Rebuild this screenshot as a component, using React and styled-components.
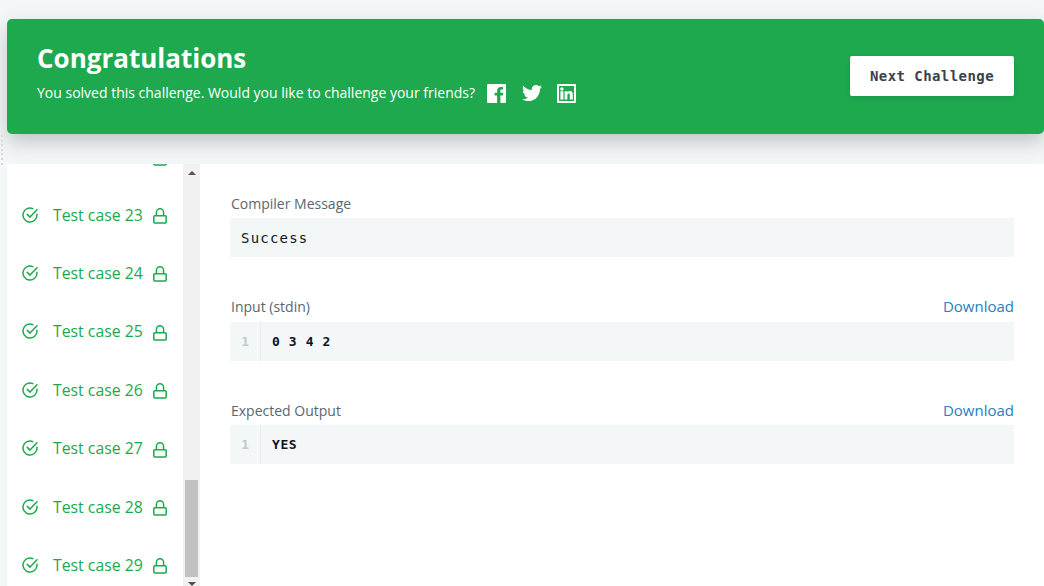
import React from 'react'
import styled, { createGlobalStyle } from 'styled-components'
import { FaTwitter } from 'react-icons/fa'

const GlobalStyle = createGlobalStyle`
  html, body {
    margin: 0;
    height: 586px;
    overflow: hidden;
    background: #f3f7f7;
    font-family: "Open Sans", "Noto Sans", sans-serif;
  }
`

const Page = styled.div`
  position: relative;
  display: flex;
  flex-direction: column;
  width: 1044px;
  height: 586px;
  overflow: hidden;
  padding: 19px 0 0 7px;
  box-sizing: border-box;
`

const ResizeDots = styled.div`
  position: absolute;
  top: 135px;
  left: 1px;
  width: 2px;
  height: 30px;
  background: repeating-linear-gradient(#d6d9dc 0 2px, transparent 2px 4.6px);
`

const Banner = styled.section`
  display: flex;
  flex: none;
  align-items: center;
  justify-content: space-between;
  height: 115px;
  padding: 0 30px 0;
  box-sizing: border-box;
  background: #1ea94f;
  border-radius: 5px;
  box-shadow: 0 8px 20px rgba(40, 50, 60, 0.26);
  color: #fff;
`

const BannerText = styled.div`
  margin-bottom: 8px;
`

const Title = styled.h2`
  margin: 0 0 5px;
  font-size: 26px;
  line-height: 36px;
  font-weight: 700;
`

const Subtitle = styled.div`
  display: flex;
  align-items: center;
  gap: 12px;
  font-size: 14px;
  line-height: 24px;
`

const Socials = styled.span`
  display: flex;
  align-items: center;
  gap: 15.5px;
`

const NextButton = styled.button`
  width: 164px;
  height: 40px;
  margin-bottom: 2px;
  border: 0;
  border-radius: 2px;
  background: #fff;
  color: #39424e;
  font-family: "DejaVu Sans Mono", "Liberation Mono", monospace;
  font-size: 14px;
  font-weight: 700;
  letter-spacing: 0.43px;
  box-shadow: 0 2px 6px rgba(0, 0, 0, 0.1);
`

const Body = styled.div`
  display: flex;
  flex: none;
  height: 430.15px;
  margin-top: 30px;
`

const Sidebar = styled.aside`
  display: flex;
  flex-direction: column;
  justify-content: flex-end;
  flex: none;
  width: 176px;
  overflow: hidden;
  background: #fff;
`

const CaseRow = styled.div`
  display: flex;
  flex: none;
  align-items: center;
  height: 58.4px;
  padding-left: 15px;
  color: #1ba94c;
  font-size: 15.8px;
`

const CaseName = styled.span`
  margin: 0 10px 0 15px;
  white-space: nowrap;
`

const Scrollbar = styled.div`
  display: flex;
  flex-direction: column;
  align-items: center;
  flex: none;
  width: 17px;
  height: 422px;
  background: #f1f1f1;
`

const Arrow = styled.div`
  flex: none;
  width: 0;
  height: 0;
  margin: ${p => (p.$down ? '5px 0 0' : '7px 0 0')};
  border-left: 4px solid transparent;
  border-right: 4px solid transparent;
  border-${p => (p.$down ? 'top' : 'bottom')}: 4px solid #505050;
`

const Thumb = styled.div`
  flex: none;
  width: 13px;
  height: 97px;
  margin-top: auto;
  background: #c1c1c1;
`

const Main = styled.main`
  display: flex;
  flex-direction: column;
  flex: 1;
  padding: 24px 30px 0;
  background: #fff;
`

const Block = styled.div`
  margin-bottom: ${p => p.$gap}px;
`

const BlockHead = styled.div`
  display: flex;
  align-items: center;
  justify-content: space-between;
  height: ${p => p.$height}px;
  padding-bottom: ${p => p.$lift || 0}px;
  box-sizing: border-box;
`

const Label = styled.span`
  margin-left: 1px;
  color: #576871;
  font-size: 14px;
`

const DownloadLink = styled.a`
  color: #2a7dbf;
  font-size: 15px;
`

const MessageBox = styled.div`
  height: 39px;
  padding-left: 11px;
  background: #f3f7f7;
  color: #0e141e;
  font-family: "DejaVu Sans Mono", monospace;
  font-size: 14px;
  letter-spacing: 1.2px;
  line-height: 41px;
`

const CodeBox = styled.div`
  display: flex;
  height: 39px;
  background: #f3f7f7;
  color: #0e141e;
  font-family: "DejaVu Sans Mono", monospace;
  font-size: 13px;
  font-weight: 700;
  line-height: 39px;
`

const Gutter = styled.span`
  flex: none;
  width: 31px;
  padding-right: 11px;
  box-sizing: border-box;
  border-right: 1px solid #e7ecee;
  color: #c2c7d0;
  text-align: right;
`

const CodeText = styled.span`
  padding-left: 11px;
  letter-spacing: ${p => p.$spacing || 0}px;
  white-space: pre;
`

const StatusIcon = () => (
  <svg width="16" height="16" viewBox="0 0 16 16" fill="none" stroke="currentColor" strokeWidth="1.5" strokeLinecap="round" strokeLinejoin="round" style={{ flex: 'none' }}>
    <path d="M15 7.3V8a7 7 0 1 1-4.2-6.4" />
    <path d="M5.3 7.4 8 10.1 15 2.8" />
  </svg>
)

const LockIcon = () => (
  <svg width="14" height="16" viewBox="0 0 14 16" fill="none" stroke="currentColor" strokeWidth="1.5" style={{ flex: 'none', marginTop: 3 }}>
    <rect x="0.8" y="7.8" width="12.4" height="7.2" rx="1" />
    <path d="M3.4 7.8V4.4a3.6 3.6 0 0 1 7.2 0v3.4" />
  </svg>
)

const FacebookIcon = () => (
  <svg width="19" height="19" viewBox="0 0 19 19" fill="#fff">
    <path d="M1 0h17a1 1 0 0 1 1 1v17a1 1 0 0 1-1 1h-4.6v-7.4h2.5l.4-2.9h-2.9V7c0-.8.2-1.4 1.4-1.4H16V3c-.3 0-1.2-.1-2.2-.1-2.2 0-3.7 1.3-3.7 3.8v2H7.6v2.9h2.5V19H1a1 1 0 0 1-1-1V1a1 1 0 0 1 1-1z" />
  </svg>
)

const LinkedinIcon = () => (
  <svg width="19" height="19" viewBox="0 0 19 19" fill="#fff">
    <path fillRule="evenodd" d="M1 0h17a1 1 0 0 1 1 1v17a1 1 0 0 1-1 1H1a1 1 0 0 1-1-1V1a1 1 0 0 1 1-1zm1 2v15h15V2z" />
    <rect x="3.4" y="7.2" width="3" height="8.4" />
    <circle cx="4.9" cy="4.9" r="1.7" />
    <path d="M7.6 7.2h2.8v1.2c.5-.8 1.4-1.4 2.5-1.4 2.1 0 2.9 1.4 2.9 3.6v5h-3v-4.4c0-1-.2-1.7-1.1-1.7-1 0-1.3.7-1.3 1.7v4.4H7.6z" />
  </svg>
)

const cases = [22, 23, 24, 25, 26, 27, 28, 29]

export default function App() {
  return (
    <>
      <GlobalStyle />
      <Page>
        <Banner>
          <BannerText>
            <Title>Congratulations</Title>
            <Subtitle>
              You solved this challenge. Would you like to challenge your friends?
              <Socials>
                <FacebookIcon />
                <FaTwitter size={20} />
                <LinkedinIcon />
              </Socials>
            </Subtitle>
          </BannerText>
          <NextButton>Next Challenge</NextButton>
        </Banner>
        <ResizeDots />
        <Body>
          <Sidebar>
            {cases.map(n => (
              <CaseRow key={n}>
                <StatusIcon />
                <CaseName>Test case {n}</CaseName>
                <LockIcon />
              </CaseRow>
            ))}
          </Sidebar>
          <Scrollbar>
            <Arrow />
            <Thumb />
            <Arrow $down />
          </Scrollbar>
          <Main>
            <Block $gap={35}>
              <BlockHead $height={30}><Label>Compiler Message</Label></BlockHead>
              <MessageBox>Success</MessageBox>
            </Block>
            <Block $gap={36}>
              <BlockHead $height={30} $lift={2}>
                <Label>Input (stdin)</Label>
                <DownloadLink>Download</DownloadLink>
              </BlockHead>
              <CodeBox>
                <Gutter>1</Gutter>
                <CodeText $spacing={0.6}>0 3 4 2</CodeText>
              </CodeBox>
            </Block>
            <Block $gap={0}>
              <BlockHead $height={28} $lift={2}>
                <Label>Expected Output</Label>
                <DownloadLink>Download</DownloadLink>
              </BlockHead>
              <CodeBox>
                <Gutter>1</Gutter>
                <CodeText $spacing={0.6}>YES</CodeText>
              </CodeBox>
            </Block>
          </Main>
        </Body>
      </Page>
    </>
  )
}
